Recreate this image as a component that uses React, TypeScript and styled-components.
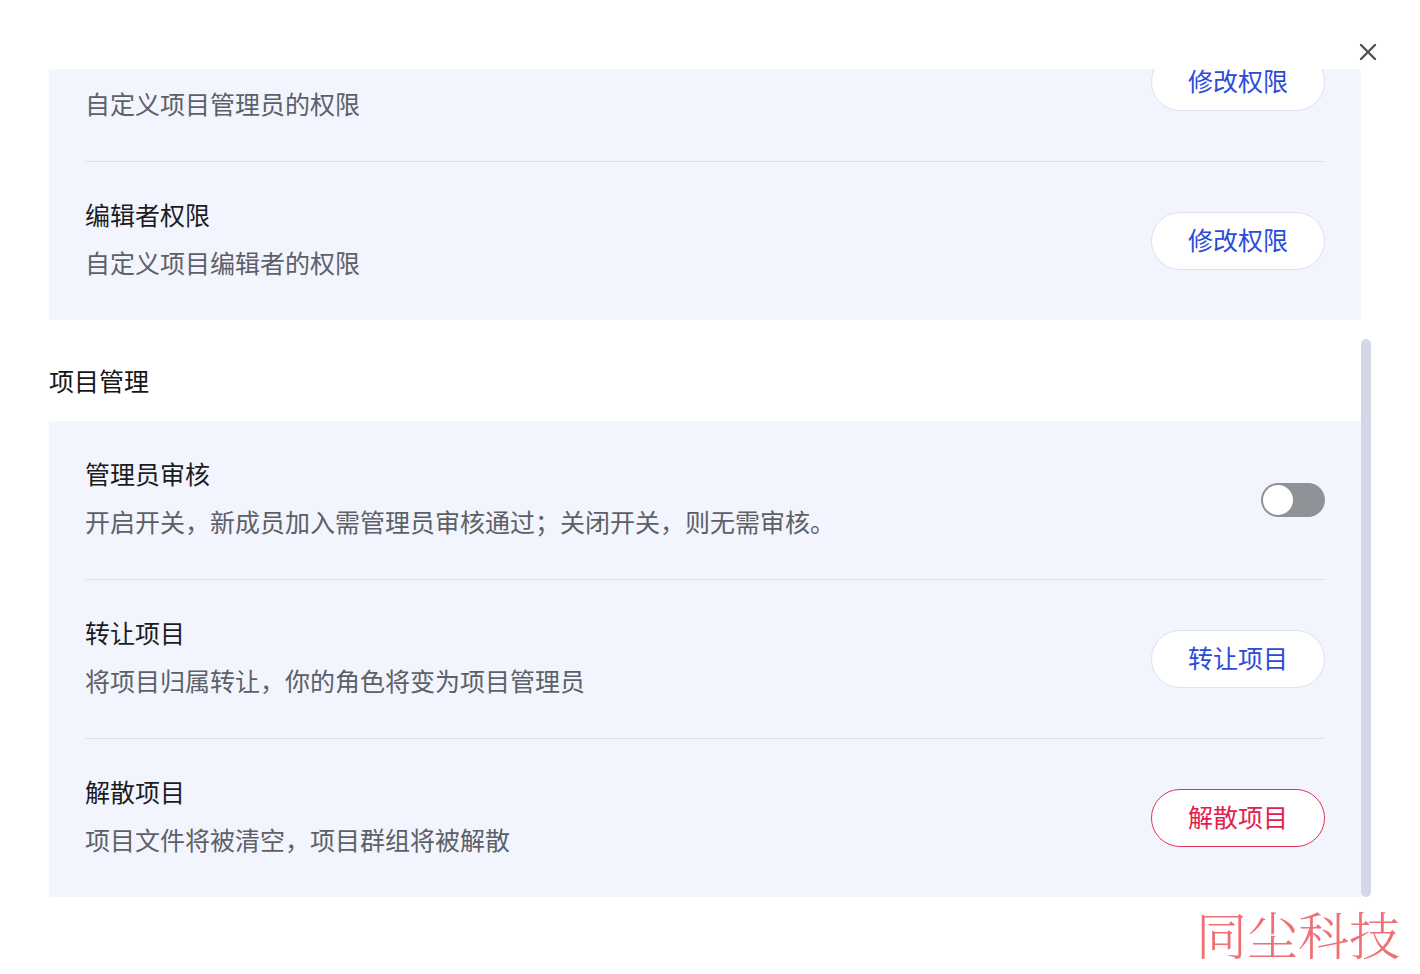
import React, { useLayoutEffect, useRef, useState } from "react";
import styled, { createGlobalStyle } from "styled-components";

const Global = createGlobalStyle`
  html, body { margin: 0; padding: 0; background: #ffffff; }
  body {
    font-family: "Noto Sans CJK SC", "Noto Sans", sans-serif;
    -webkit-font-smoothing: antialiased;
  }
  * { box-sizing: border-box; }
`;

const Page = styled.div`
  position: relative;
  width: 1420px;
  height: 974px;
  background: #ffffff;
  overflow: hidden;
`;

const Header = styled.div`
  height: 69px;
  display: flex;
  justify-content: flex-end;
  align-items: flex-start;
  padding: 43px 43px 0 0;
`;

const CloseButton = styled.button`
  width: 18px;
  height: 18px;
  padding: 0;
  border: none;
  background: transparent;
  display: flex;
  align-items: center;
  justify-content: center;
  cursor: pointer;
`;

const Body = styled.div`
  margin-left: 49px;
  height: 828px;
  display: flex;
`;

const Viewport = styled.div`
  width: 1312px;
  height: 100%;
  overflow: hidden;
`;

const ScrollTrack = styled.div`
  width: 10px;
  height: 100%;
  display: flex;
  flex-direction: column;
  justify-content: flex-end;
`;

const ScrollThumb = styled.div`
  width: 10px;
  border-radius: 5px;
  background: #d4d7e6;
`;

const Content = styled.div`
  width: 1312px;
  padding-top: 16px;
  display: flex;
  flex-direction: column;
`;

const SectionTitle = styled.div<{ $first?: boolean }>`
  padding: ${(p) => (p.$first ? "0" : "42px")} 0 23px;
  font-size: 25px;
  line-height: 36px;
  color: #161616;
`;

const Card = styled.div`
  background: #f2f5fd;
  display: flex;
  flex-direction: column;
`;

const Row = styled.div`
  margin: 0 36px;
  padding: 34px 0 40px;
  display: flex;
  align-items: center;
  justify-content: space-between;
  & + & { border-top: 1px solid #dde1ee; }
`;

const TextBlock = styled.div`
  display: flex;
  flex-direction: column;
  gap: 12px;
`;

const RowTitle = styled.div`
  font-size: 25px;
  line-height: 36px;
  color: #1c1c1e;
`;

const RowDesc = styled.div`
  font-size: 25px;
  line-height: 36px;
  color: #5d6067;
`;

const ActionButton = styled.button<{ $danger?: boolean }>`
  width: 174px;
  height: 58px;
  margin-top: 6px;
  border-radius: 29px;
  background: #ffffff;
  border: 1px solid ${(p) => (p.$danger ? "#e0315a" : "#dde1f0")};
  color: ${(p) => (p.$danger ? "#e3204c" : "#2b4bd9")};
  font-family: "Noto Sans CJK SC", "Noto Sans", sans-serif;
  font-size: 25px;
  line-height: 1;
  padding: 0 0 3px;
  flex-shrink: 0;
  cursor: pointer;
`;

const Switch = styled.button<{ $on?: boolean }>`
  width: 64px;
  height: 34px;
  margin-top: 6px;
  border-radius: 17px;
  border: none;
  padding: 2px;
  background: ${(p) => (p.$on ? "#2b4bd9" : "#8f9297")};
  display: flex;
  justify-content: ${(p) => (p.$on ? "flex-end" : "flex-start")};
  align-items: center;
  flex-shrink: 0;
  cursor: pointer;
`;

const Knob = styled.span`
  width: 30px;
  height: 30px;
  border-radius: 50%;
  background: #ffffff;
`;

const Watermark = styled.div`
  position: absolute;
  right: 20px;
  top: 908px;
  font-family: "Noto Serif CJK SC", "Noto Sans CJK SC", serif;
  font-weight: 300;
  font-size: 51px;
  line-height: 1;
  color: #ef6f74;
  pointer-events: none;
`;

type Item = {
  title: string;
  desc: string;
  action?: string;
  danger?: boolean;
  toggle?: boolean;
};

type Section = { title: string; items: Item[] };

const sections: Section[] = [
  {
    title: "基本信息",
    items: [{ title: "项目名称", desc: "修改项目的名称和简介", action: "编辑信息" }],
  },
  {
    title: "成员权限",
    items: [
      { title: "管理员权限", desc: "自定义项目管理员的权限", action: "修改权限" },
      { title: "编辑者权限", desc: "自定义项目编辑者的权限", action: "修改权限" },
    ],
  },
  {
    title: "项目管理",
    items: [
      {
        title: "管理员审核",
        desc: "开启开关，新成员加入需管理员审核通过；关闭开关，则无需审核。",
        toggle: true,
      },
      { title: "转让项目", desc: "将项目归属转让，你的角色将变为项目管理员", action: "转让项目" },
      { title: "解散项目", desc: "项目文件将被清空，项目群组将被解散", action: "解散项目", danger: true },
    ],
  },
];

export default function App() {
  const ref = useRef<HTMLDivElement>(null);
  const [thumb, setThumb] = useState(559);

  useLayoutEffect(() => {
    const el = ref.current;
    if (!el) return;
    el.scrollTop = el.scrollHeight;
    const h = el.clientHeight;
    const total = el.scrollHeight;
    if (total > 0) setThumb(Math.round((h * h) / total));
  }, []);

  return (
    <Page>
      <Global />
      <Header>
        <CloseButton aria-label="关闭">
          <svg width="18" height="18" viewBox="0 0 18 18">
            <path d="M2 2 L16 16 M16 2 L2 16" stroke="#505257" strokeWidth="2.4" strokeLinecap="round" />
          </svg>
        </CloseButton>
      </Header>
      <Body>
        <Viewport ref={ref}>
          <Content>
            {sections.map((s, si) => (
              <React.Fragment key={s.title}>
                <SectionTitle $first={si === 0}>{s.title}</SectionTitle>
                <Card>
                  {s.items.map((it) => (
                    <Row key={it.title}>
                      <TextBlock>
                        <RowTitle>{it.title}</RowTitle>
                        <RowDesc>{it.desc}</RowDesc>
                      </TextBlock>
                      {it.toggle ? (
                        <Switch aria-label={it.title}>
                          <Knob />
                        </Switch>
                      ) : (
                        <ActionButton $danger={it.danger}>{it.action}</ActionButton>
                      )}
                    </Row>
                  ))}
                </Card>
              </React.Fragment>
            ))}
          </Content>
        </Viewport>
        <ScrollTrack>
          <ScrollThumb style={{ height: thumb }} />
        </ScrollTrack>
      </Body>
      <Watermark>同尘科技</Watermark>
    </Page>
  );
}
